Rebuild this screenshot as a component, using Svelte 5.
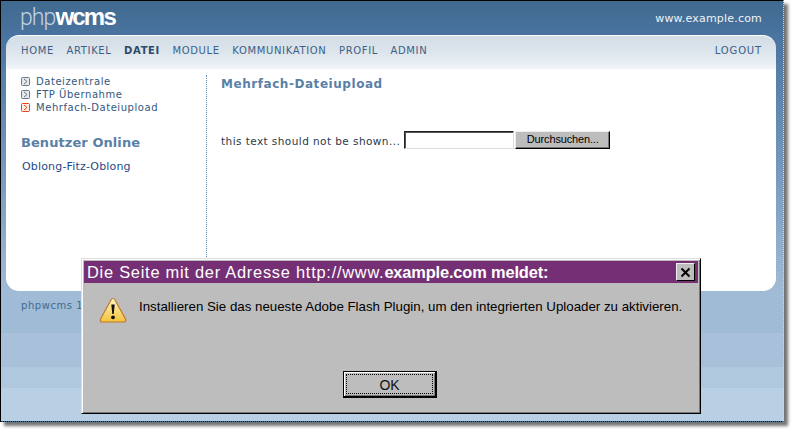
<script>
  const nav = [
    { label: 'HOME' },
    { label: 'ARTIKEL' },
    { label: 'DATEI', active: true },
    { label: 'MODULE' },
    { label: 'KOMMUNIKATION' },
    { label: 'PROFIL' },
    { label: 'ADMIN' }
  ];
  const side = [
    { label: 'Dateizentrale' },
    { label: 'FTP Übernahme' },
    { label: 'Mehrfach-Dateiupload', active: true }
  ];
</script>

<div class="shot">
  <div class="page">
    <header class="top">
      <div class="logo"><span class="php">php</span><span class="wcms">wcms</span></div>
      <div class="site">www.example.com</div>
    </header>

    <main class="panel">
      <nav class="nav">
        <div class="nav-left">
          {#each nav as item}
            <span class:active={item.active}>{item.label}</span>
          {/each}
        </div>
        <span class="logout">LOGOUT</span>
      </nav>
      <div class="cols">
        <aside class="side">
          <ul>
            {#each side as item}
              <li class:active={item.active}>
                <svg width="9" height="9" viewBox="0 0 9 9">
                  <rect x="0.5" y="0.5" width="8" height="8" rx="1" class="box" />
                  <path d="M3 2 L6 4.5 L3 7" fill="none" class="arrow" />
                </svg>
                {item.label}
              </li>
            {/each}
          </ul>
          <h3>Benutzer Online</h3>
          <div class="user">Oblong-Fitz-Oblong</div>
        </aside>
        <section class="content">
          <h2>Mehrfach-Dateiupload</h2>
          <div class="upload">
            <span class="hint">this text should not be shown...</span>
            <div class="field"></div>
            <div class="browse">Durchsuchen...</div>
          </div>
        </section>
      </div>
    </main>

    <footer class="foot">phpwcms 1</footer>
  </div>

  <div class="dialog">
    <div class="title">
      <span class="title-text">Die Seite mit der Adresse http://www.<b>example.com meldet:</b></span>
      <div class="close">
        <svg width="11" height="11" viewBox="0 0 11 11">
          <path d="M1.5 1.5 L9.5 9.5 M9.5 1.5 L1.5 9.5" stroke="#000" stroke-width="2" fill="none" />
        </svg>
      </div>
    </div>
    <div class="msg">
      <svg width="28" height="27" viewBox="0 0 28 27">
        <defs>
          <linearGradient id="warn" x1="0" y1="0" x2="0" y2="1">
            <stop offset="0" stop-color="#fff6c0" />
            <stop offset="1" stop-color="#f2c23a" />
          </linearGradient>
        </defs>
        <path d="M14 1.5 C15 1.5 15.6 2 16 3 L26.5 22 C27.2 23.6 26.4 25 24.6 25 L3.4 25 C1.6 25 .8 23.6 1.5 22 L12 3 C12.4 2 13 1.5 14 1.5 Z" fill="url(#warn)" stroke="#c07a30" stroke-width="1.2" />
        <path d="M12.3 7.5 L15.7 7.5 L14.7 17 L13.3 17 Z" fill="#111" />
        <circle cx="14" cy="20.3" r="1.9" fill="#111" />
      </svg>
      <p>Installieren Sie das neueste Adobe Flash Plugin, um den integrierten Uploader zu aktivieren.</p>
    </div>
    <div class="actions">
      <div class="ok"><span>OK</span></div>
    </div>
  </div>
</div>

<style>
  :global(body) {
    margin: 0;
    background: #fff;
  }
  .shot {
    position: relative;
    width: 792px;
    height: 429px;
    overflow: hidden;
    background: #fff;
    font-family: "DejaVu Sans", sans-serif;
  }
  .page {
    box-sizing: border-box;
    width: 784px;
    height: 422px;
    display: flex;
    flex-direction: column;
    border-top: 1px solid #000;
    border-left: 1px solid #000;
    border-right: 1px dotted #d8d8d8;
    border-bottom: 1px dotted #111;
    box-shadow: 4px 4px 3px rgba(70, 70, 70, 0.75);
    background: linear-gradient(
      to bottom,
      #40698f 0,
      #4b76a2 40px,
      #7a9cc0 180px,
      #a0bbd5 290px,
      #a0bbd5 332px,
      #a8c0da 332px,
      #a8c0da 366px,
      #b0c8de 366px,
      #b0c8de 387px,
      #b8cfe4 387px
    );
  }
  .top {
    height: 34px;
    display: flex;
    justify-content: space-between;
    padding: 0 21px 0 19px;
  }
  .logo {
    font-family: "Liberation Sans", sans-serif;
    line-height: 31px;
    color: #fff;
    white-space: nowrap;
  }
  .php {
    font-family: Roboto, sans-serif;
    font-size: 23px;
    font-weight: 300;
    color: #c3d2e0;
    letter-spacing: -0.9px;
  }
  .wcms {
    font-size: 24px;
    font-weight: 700;
    letter-spacing: -1.8px;
  }
  .site {
    font-size: 11px;
    line-height: 35px;
    color: #f0f4f8;
    letter-spacing: 0.2px;
  }
  .panel {
    box-sizing: border-box;
    width: 770px;
    height: 256px;
    margin-left: 5px;
    border-top: 1px solid #fff;
    border-radius: 13px;
    overflow: hidden;
    background: linear-gradient(to bottom, #d3dde6 0, #dde5ec 16px, #e7edf3 26px, #f3f6f9 33px, #fff 34px);
    display: flex;
    flex-direction: column;
  }
  .nav {
    box-sizing: border-box;
    height: 33px;
    flex: none;
    display: flex;
    justify-content: space-between;
    align-items: center;
    padding: 0 14px 4px 15px;
    font-size: 10px;
    letter-spacing: 0.65px;
    color: #3a6087;
  }
  .nav-left {
    display: flex;
    gap: 12.5px;
  }
  .nav .active {
    font-weight: 700;
    color: #2c4a6b;
  }
  .logout {
    letter-spacing: 0.85px;
  }
  .cols {
    flex: 1;
    display: flex;
    padding-top: 6px;
  }
  .side {
    width: 201px;
    padding-left: 15px;
    box-sizing: border-box;
    border-right: 1px dotted #5f87ad;
    flex: none;
  }
  .side ul {
    list-style: none;
    margin: 0;
    padding: 0;
  }
  .side li {
    display: flex;
    align-items: center;
    gap: 6px;
    height: 13px;
    font-size: 10px;
    letter-spacing: 0.55px;
    color: #33587e;
  }
  .box {
    fill: #e6e9ec;
    stroke: #66788a;
  }
  .arrow {
    stroke: #66788a;
  }
  .side li.active .box {
    fill: #fdeee6;
    stroke: #e8431c;
  }
  .side li.active .arrow {
    stroke: #e8431c;
  }
  .side h3 {
    margin: 21px 0 0;
    font-size: 13px;
    line-height: 16px;
    font-weight: 700;
    color: #5b80a6;
    letter-spacing: 0.07px;
  }
  .user {
    margin: 9px 0 0 1px;
    font-size: 11px;
    line-height: 14px;
    letter-spacing: 0.17px;
    color: #1f4a8a;
  }
  .content {
    flex: 1;
    padding-left: 14px;
  }
  .content h2 {
    margin: 2px 0 0;
    font-size: 12px;
    line-height: 15px;
    font-weight: 700;
    color: #5b80a6;
    letter-spacing: 0.55px;
  }
  .upload {
    display: flex;
    align-items: center;
    margin-top: 39px;
    font-size: 10.5px;
    color: #2b3a4a;
    letter-spacing: 0.43px;
  }
  .hint {
    padding-top: 2px;
  }
  .field {
    box-sizing: border-box;
    width: 110px;
    height: 18px;
    margin-left: 4px;
    background: #fff;
    border: 1px solid #ddd;
    border-top: 1px solid #222;
    border-left: 1px solid #222;
    box-shadow: inset 1px 1px 0 #555;
  }
  .browse {
    box-sizing: border-box;
    width: 95px;
    height: 18px;
    margin-left: 1px;
    background: #bdbdbd;
    border: 1px solid #eee;
    border-right: 1px solid #000;
    border-bottom: 1px solid #000;
    box-shadow: inset -1px -1px 0 #777;
    font-family: "Liberation Sans", sans-serif;
    font-size: 11px;
    letter-spacing: -0.15px;
    line-height: 15px;
    text-align: center;
    color: #000;
  }
  .foot {
    padding: 9px 0 0 20px;
    font-size: 10px;
    letter-spacing: 0.55px;
    line-height: 12px;
    color: #3f6a94;
  }
  .dialog {
    position: absolute;
    left: 81px;
    top: 258px;
    width: 620px;
    height: 156px;
    box-sizing: border-box;
    background: #bdbdbd;
    border: 1px solid #dfdfdf;
    border-right-color: #000;
    border-bottom-color: #000;
    box-shadow: inset 1px 1px 0 #fff, inset -1px -1px 0 #777;
    padding: 2px;
    font-family: "Liberation Sans", sans-serif;
    display: flex;
    flex-direction: column;
  }
  .title {
    height: 22px;
    flex: none;
    box-sizing: border-box;
    background: #753075;
    color: #fff;
    display: flex;
    justify-content: space-between;
    align-items: center;
    padding: 0 3px 0 3px;
  }
  .title-text {
    font-size: 16.4px;
    line-height: 22px;
    letter-spacing: 0.75px;
    white-space: nowrap;
  }
  .title-text b {
    letter-spacing: -0.15px;
  }
  .close {
    box-sizing: border-box;
    width: 19px;
    height: 18px;
    background: #bdbdbd;
    border: 1px solid #eee;
    border-right-color: #000;
    border-bottom-color: #000;
    display: flex;
    align-items: center;
    justify-content: center;
  }
  .msg {
    display: flex;
    align-items: flex-start;
    padding: 14px 0 0 15px;
    gap: 12px;
  }
  .msg svg {
    flex: none;
  }
  .msg p {
    margin: 3px 0 0;
    font-size: 13.3px;
    line-height: 14px;
    color: #000;
    white-space: nowrap;
  }
  .actions {
    margin-top: auto;
    display: flex;
    justify-content: center;
    padding: 0 2px 13px 0;
  }
  .ok {
    box-sizing: border-box;
    width: 94px;
    height: 27px;
    border: 1px solid #000;
    border-right-width: 2px;
    border-bottom-width: 2px;
    background: #bdbdbd;
    box-shadow: inset 1px 1px 0 #fff, inset -1px -1px 0 #777;
    padding: 2px;
    display: flex;
  }
  .ok span {
    flex: 1;
    border: 1px dotted #000;
    font-size: 14px;
    line-height: 20px;
    text-align: center;
    color: #111;
  }
</style>
